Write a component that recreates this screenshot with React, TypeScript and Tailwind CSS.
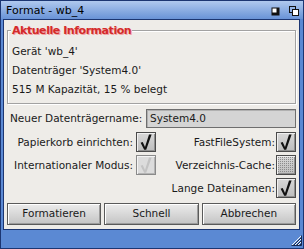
import React from "react";

type BoxState = "on" | "off" | "disabled";

function CheckBox({ state }: { state: BoxState }) {
  return (
    <div
      className={
        "h-[20px] w-[20px] border border-[#4a4a4a] flex items-center justify-center " +
        (state === "disabled"
          ? "bg-[#dcdcdc] border-[#8a8a8a] shadow-[inset_1px_1px_0_#f4f4f4,inset_-1px_-1px_0_#b4b4b4]"
          : "bg-gradient-to-b from-[#d8d8d8] to-[#bdbdbd] shadow-[inset_1px_1px_0_#f0f0f0,inset_-1px_-1px_0_#8e8e8e]")
      }
    >
      {state === "off" ? (
        <svg width="16" height="16" viewBox="0 0 16 16">
          <defs>
            <pattern id="dots" width="2" height="2" patternUnits="userSpaceOnUse">
              <rect x="0" y="0" width="1" height="1" fill="#8c8c8c" />
            </pattern>
          </defs>
          <rect x="0" y="0" width="16" height="16" fill="url(#dots)" />
        </svg>
      ) : (
        <svg width="18" height="18" viewBox="0 0 18 18">
          <path
            d="M3.6 9.8 L5.7 9 L8 14 L12 1.6 L14.6 1.6 L9.2 16.8 L7.2 16.8 Z"
            fill={state === "on" ? "#111" : "#c3c3c3"}
          />
        </svg>
      )}
    </div>
  );
}

function Button({ label }: { label: string }) {
  return (
    <button className="flex-1 h-[22px] border border-[#5a5a5a] bg-gradient-to-b from-[#ececec] to-[#c4c4c4] shadow-[inset_1px_1px_0_#ffffff,inset_-1px_-1px_0_#9c9c9c] text-[10.5px] text-[#1a1a1a]">
      {label}
    </button>
  );
}

function Label({ children, right }: { children: React.ReactNode; right?: boolean }) {
  return (
    <span className={"text-right text-[10.5px] text-[#1a1a1a] leading-[20px] whitespace-nowrap " + (right ? "-mr-[2px]" : "")}>
      {children}
    </span>
  );
}

export default function App() {
  return (
    <div className="w-[304px] h-[249px] bg-[#5b89d3] border border-[#1c3672] flex flex-col overflow-hidden font-['DejaVu_Sans',sans-serif]">
      {/* title bar */}
      <div className="h-[18px] shrink-0 bg-gradient-to-b from-[#b0c9ee] to-[#6993d7] flex items-center pl-[5px] pr-[4px]">
        <span className="text-[11px] text-black leading-none">Format - wb_4</span>
        <div className="ml-auto flex items-center gap-[9px] pt-[2px]">
          <svg width="9" height="9" viewBox="0 0 9 9">
            <rect x="0.5" y="0.5" width="8" height="8" fill="#111" />
            <rect x="1.5" y="1.5" width="4" height="4" fill="#fff" />
          </svg>
          <svg width="10" height="10" viewBox="0 0 10 10">
            <rect x="0.5" y="0.5" width="6" height="6" fill="none" stroke="#111" />
            <rect x="3.5" y="3.5" width="6" height="6" fill="#fff" stroke="#111" />
          </svg>
        </div>
      </div>

      {/* content */}
      <div className="flex-1 ml-[2px] mr-[3px] border border-[#1c3672] bg-[#eeece8] flex flex-col px-[3px] pt-[10px] pb-[4px]">
        <div className="relative h-[74px] border border-[#a2a2a2] shadow-[inset_1px_1px_0_#ffffff,1px_1px_0_#ffffff] pt-[11px] px-[4px] text-[10.5px] text-[#1a1a1a]">
          <span className="absolute -top-[7px] left-[3px] px-[1px] bg-[#eeece8] text-[11px] font-bold leading-[13px] tracking-[-0.45px] text-[#d42a2a] [text-shadow:1px_1px_0_#f2a4a4]">
            Aktuelle Information
          </span>
          <div className="leading-[19px]">Gerät 'wb_4'</div>
          <div className="leading-[19px]">Datenträger 'System4.0'</div>
          <div className="leading-[19px]">515 M Kapazität, 15 % belegt</div>
        </div>

        <div className="mt-[5px] h-[19px] flex items-center">
          <span className="pl-[3px] text-[10.5px] text-[#1a1a1a] whitespace-nowrap">Neuer Datenträgername:</span>
          <div className="ml-auto w-[150px] h-[19px] border border-[#6e6e6e] bg-[#d4d4d4] shadow-[inset_1px_1px_0_#b0b0b0] flex items-center px-[3px] text-[10.5px] text-[#1a1a1a]">
            System4.0
          </div>
        </div>

        <div className="mt-[4px] grid grid-cols-[126px_20px_1fr_20px] gap-x-[3px] gap-y-[3px] items-center">
          <Label>Papierkorb einrichten:</Label>
          <CheckBox state="on" />
          <Label right>FastFileSystem:</Label>
          <CheckBox state="on" />

          <Label>Internationaler Modus:</Label>
          <CheckBox state="disabled" />
          <Label right>Verzeichnis-Cache:</Label>
          <CheckBox state="off" />

          <span />
          <span />
          <Label right>Lange Dateinamen:</Label>
          <CheckBox state="on" />
        </div>

        <div className="mt-auto flex gap-[3px]">
          <Button label="Formatieren" />
          <Button label="Schnell" />
          <Button label="Abbrechen" />
        </div>
      </div>

      {/* bottom border with resize gadget */}
      <div className="h-[18px] shrink-0 flex justify-end items-end pr-[1px] pb-[2px]">
        <svg width="11" height="11" viewBox="0 0 11 11">
          <path d="M10 1 L1 10" stroke="#f4f4f4" strokeWidth="1" />
          <path d="M10 4 L4 10" stroke="#f4f4f4" strokeWidth="1" />
          <path d="M10 7 L7 10" stroke="#f4f4f4" strokeWidth="1" />
          <path d="M11 2 L2 11" stroke="#1a2a50" strokeWidth="1" />
          <path d="M11 5 L5 11" stroke="#1a2a50" strokeWidth="1" />
          <path d="M11 8 L8 11" stroke="#1a2a50" strokeWidth="1" />
          <path d="M0.5 10.5 L10.5 10.5 L10.5 0.5" fill="none" stroke="#1a2a50" />
        </svg>
      </div>
    </div>
  );
}
